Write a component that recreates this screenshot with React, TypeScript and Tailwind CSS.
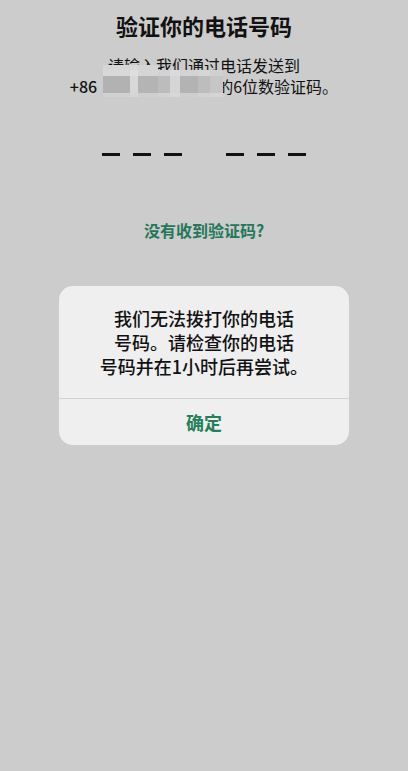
import React from "react";

// blurred phone number, cells laid out row by row
const cells: string[][] = [
  ["#d6d6d6", "#d9d9d9", "#d4d4d4", "transparent", "transparent", "transparent", "transparent", "transparent"],
  ["#d8d8d8", "#dedede", "#d5d5d5", "#d2d2d2", "#dadada", "#d3d3d3", "#d6d6d6", "#d0d0d0"],
  ["#b2b2b2", "#d8d8d8", "#b4b4b4", "#bcbcbc", "#d5d5d5", "#b3b3b3", "#bdbdbd", "#c6c6c6"],
  ["#d1d1d1", "#d6d6d6", "#cfcfcf", "#d2d2d2", "#d7d7d7", "#cecece", "#d2d2d2", "#d4d4d4"],
];

function Mosaic() {
  return (
    <div className="absolute left-[6px] top-[-11px] grid grid-cols-[27px_8px_20px_12px_10px_18px_12px_13px] grid-rows-[5px_6px_17px_4px] blur-[0.5px]">
      {cells.flat().map((c, i) => (
        <div key={i} style={{ backgroundColor: c }} />
      ))}
    </div>
  );
}

function Dash() {
  return <div className="w-[18px] h-[3px] bg-[#111]" />;
}

export default function App() {
  return (
    <div
      className="w-[408px] h-[771px] bg-[#cccccc] flex flex-col items-center text-[#111] overflow-hidden"
      style={{ fontFamily: '"Noto Sans CJK SC", "Noto Sans", sans-serif' }}
    >
      <h1 className="mt-[10px] text-[22px] leading-[30px] font-bold">验证你的电话号码</h1>

      <div className="mt-[15px] text-[16px] leading-[21px] text-center">
        <p>请输入我们通过电话发送到</p>
        <p className="flex items-center justify-center">
          <span className="font-medium">+86</span>
          <span className="relative inline-block w-[120px] h-[21px]">
            <Mosaic />
          </span>
          <span>的6位数验证码。</span>
        </p>
      </div>

      <div className="mt-[56px] flex items-center">
        <div className="flex gap-[13px]">
          <Dash />
          <Dash />
          <Dash />
        </div>
        <div className="flex gap-[13px] ml-[44px]">
          <Dash />
          <Dash />
          <Dash />
        </div>
      </div>

      <button className="mt-[63px] text-[16px] leading-[22px] font-semibold text-[#23785a]">
        没有收到验证码?
      </button>

      <div className="mt-[45px] w-[290px] bg-[#efefef] rounded-[14px] flex flex-col">
        <p className="px-4 pt-[20px] pb-[20px] text-center text-[18px] leading-[24px] font-medium">
          我们无法拨打你的电话
          <br />
          号码。请检查你的电话
          <br />
          号码并在1小时后再尝试。
        </p>
        <div className="h-px bg-[#d2d2d2]" />
        <button className="h-[46px] text-[18px] font-semibold text-[#23805a]">确定</button>
      </div>
    </div>
  );
}
